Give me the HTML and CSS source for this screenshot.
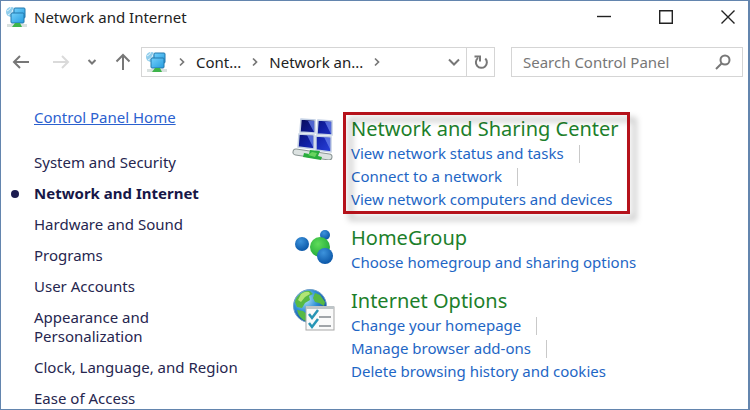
FILE: index.html
```html
<!DOCTYPE html>
<html lang="en">
<head>
<meta charset="utf-8">
<title>Network and Internet</title>
<link rel="stylesheet" href="styles.css">
</head>
<body>
<svg class="defs" aria-hidden="true">
  <defs>
    <linearGradient id="screen" x1="0" y1="0" x2="1" y2="1"><stop offset="0" stop-color="#74d0fa"/><stop offset="1" stop-color="#249ce0"/></linearGradient>
    <linearGradient id="dark" x1="0" y1="0" x2="1" y2="1"><stop offset="0" stop-color="#060a55"/><stop offset=".5" stop-color="#101fa4"/><stop offset="1" stop-color="#2941dc"/></linearGradient>
    <radialGradient id="blue" cx=".4" cy=".3" r=".7"><stop offset="0" stop-color="#3d93dc"/><stop offset="1" stop-color="#0b57a8"/></radialGradient>
    <radialGradient id="green" cx=".4" cy=".35" r=".7"><stop offset="0" stop-color="#5fdc5a"/><stop offset="1" stop-color="#20a838"/></radialGradient>
    <radialGradient id="sea" cx=".35" cy=".3" r=".75"><stop offset="0" stop-color="#b5e6fa"/><stop offset=".5" stop-color="#2f8fd6"/><stop offset="1" stop-color="#0c4092"/></radialGradient>
    <symbol id="network" viewBox="0 0 22 22">
      <circle cx="5" cy="6" r="5" fill="#8fcdec"/><path d="M1 5q3-1 4-4M2 9q4-1 6-7" stroke="#e4f5fc" fill="none"/>
      <rect x="8" y="2" width="11" height="10" rx="1" fill="url(#screen)" stroke="#2378ad"/>
      <rect x="5" y="7" width="13" height="10" rx="1" fill="url(#screen)" stroke="#2378ad"/>
      <path d="M1 18h20v3H1z" fill="#d9e1df"/><path d="M9 17h5l2 4H6z" fill="#3eb44b"/>
    </symbol>
    <symbol id="crumb" viewBox="0 0 8 10"><path d="M2 1.500 5.500 5 2 8.500" fill="none" stroke="#777" stroke-width="1.700"/></symbol>
  </defs>
</svg>
<div class="window">
  <header class="titlebar">
    <svg class="app-icon"><use href="#network"/></svg>
    <h1>Network and Internet</h1>
    <div class="controls">
      <button aria-label="Minimize"><svg viewBox="0 0 14 14"><path d="M0 6.500h14" /></svg></button>
      <button aria-label="Maximize"><svg viewBox="0 0 14 14"><path d="M.7.700h12.600v12.600H.7z"/></svg></button>
      <button aria-label="Close"><svg viewBox="0 0 14 14"><path d="m.5.500 13 13m0-13-13 13"/></svg></button>
    </div>
  </header>
  <nav class="toolbar" aria-label="Navigation">
    <div class="history">
      <button aria-label="Back"><svg viewBox="0 0 18 16"><path d="M17 8H2m6-6L2 8l6 6"/></svg></button>
      <button aria-label="Forward" disabled><svg viewBox="0 0 18 16"><path d="M1 8h15m-6-6 6 6-6 6"/></svg></button>
      <button class="recent" aria-label="Recent locations"><svg viewBox="0 0 10 16"><path d="m1.500 6 3.500 3.500L8.500 6"/></svg></button>
      <button aria-label="Up"><svg viewBox="0 0 18 18"><path d="M9 17V2M2.500 8.500 9 2l6.500 6.500"/></svg></button>
    </div>
    <div class="address">
      <svg class="app-icon"><use href="#network"/></svg>
      <svg class="crumb"><use href="#crumb"/></svg>
      <a href="#control">Cont...</a>
      <svg class="crumb"><use href="#crumb"/></svg>
      <a href="#network-internet">Network an...</a>
      <svg class="crumb"><use href="#crumb"/></svg>
      <button class="drop" aria-label="Previous locations"><svg viewBox="0 0 14 10"><path d="m2 2.500 5 5 5-5"/></svg></button>
      <button class="refresh" aria-label="Refresh"><svg viewBox="0 0 16 16"><path d="M12.300 4.500A5.500 5.500 0 1 1 5 4M1.500 2.500H7v5"/></svg></button>
    </div>
    <div class="search">
      <input type="text" aria-label="Search Control Panel" placeholder="Search Control Panel">
      <svg viewBox="0 0 16 16"><circle cx="10" cy="6" r="4.500"/><path d="m6.500 9.500-5.500 5.500"/></svg>
    </div>
  </nav>
  <div class="content">
    <aside>
      <a class="home" href="#home">Control Panel Home</a>
      <ul>
        <li><a href="#system">System and Security</a></li>
        <li class="current"><a href="#network-internet" aria-current="page">Network and Internet</a></li>
        <li><a href="#hardware">Hardware and Sound</a></li>
        <li><a href="#programs">Programs</a></li>
        <li><a href="#users">User Accounts</a></li>
        <li><a href="#appearance">Appearance and<br>Personalization</a></li>
        <li><a href="#clock">Clock, Language, and Region</a></li>
        <li><a href="#ease">Ease of Access</a></li>
      </ul>
    </aside>
    <main>
      <section>
        <svg class="picture" viewBox="0 0 44 44">
          <g fill="url(#dark)" stroke="#c3d0e4" stroke-width="1.500"><path d="m9 3 14 1v13L8 16zM26 4l14 1v14l-15-1zM7 18l15 1v14L6 31zM24 20l15 1v15l-15-2z"/></g>
          <path d="m16 5 6 11V5zM33 6l6 12V6zM15 19l6 12V20zM32 21l6 12V22z" fill="#6d88f0" opacity=".7"/>
          <path d="m4 36 33 5" stroke="#8b9695" stroke-width="7" stroke-linecap="round"/><path d="m4 36 33 5" stroke="#dce2e1" stroke-width="5" stroke-linecap="round"/>
          <path d="m18 34 10 1-2 5 4 1-1 3-18-3 1-4 5 1z" fill="#29ad3d"/><path d="m20 36 5 1-2 4-7-2" fill="#68d45f"/>
        </svg>
        <div class="category highlighted">
          <h2><a href="#sharing">Network and Sharing Center</a></h2>
          <ul>
            <li><a href="#status">View network status and tasks</a></li>
            <li><a href="#connect">Connect to a network</a></li>
            <li><a href="#devices">View network computers and devices</a></li>
          </ul>
        </div>
      </section>
      <section>
        <svg class="picture" viewBox="0 0 44 44">
          <circle cx="33" cy="10" r="5" fill="url(#blue)"/><circle cx="28" cy="22" r="10" fill="url(#green)"/>
          <circle cx="10" cy="19" r="7" fill="url(#blue)"/><circle cx="33" cy="31" r="8" fill="url(#blue)"/>
        </svg>
        <div class="category">
          <h2><a href="#homegroup">HomeGroup</a></h2>
          <ul><li><a href="#choose">Choose homegroup and sharing options</a></li></ul>
        </div>
      </section>
      <section>
        <svg class="picture" viewBox="0 0 44 44">
          <circle cx="18" cy="18" r="16.500" fill="url(#sea)" stroke="#6f9fc9"/>
          <path d="M8 6q5-4 10-3l3 3-4 2 1 4-5 3-3 5-5-1-2-5q1-5 5-8zM23 5l5 2 5 7-1 4-5-3-4-1-2-4zM5 22l6 1 5 4-2 6q-7-2-9-11z" fill="#57b944"/>
          <path d="M9 6q4-3 8-2l1 2-5 3-4 5-3-2z" fill="#b1e576"/>
          <rect x="14" y="19" width="28" height="23" fill="#fafafa" stroke="#a7a7a7"/><path d="M14 18h28v3H14z" fill="#bfc5c8"/>
          <path d="M27 29h12M27 38h12" stroke="#82888d" stroke-width="1.500"/>
          <path d="m17 26 3 4 6-8M17 35l3 4 6-8" fill="none" stroke="#2795b5" stroke-width="2.500"/>
        </svg>
        <div class="category">
          <h2><a href="#options">Internet Options</a></h2>
          <ul>
            <li><a href="#homepage">Change your homepage</a></li>
            <li><a href="#addons">Manage browser add-ons</a></li>
            <li><a href="#history">Delete browsing history and cookies</a></li>
          </ul>
        </div>
      </section>
    </main>
  </div>
</div>
</body>
</html>
```
FILE: styles.css
```css
* { box-sizing: border-box; }
body { margin: 0; font: 16px/20px "Noto Sans", "Open Sans", sans-serif; color: #222; background: #fff; }
h1, h2, ul { margin: 0; padding: 0; font-weight: 400; }
ul { list-style: none; }
a { color: inherit; text-decoration: none; }
button { padding: 0; border: 0; background: none; display: flex; align-items: center; justify-content: center; }
svg { flex: none; }
.defs { position: absolute; width: 0; height: 0; }
.window { min-height: 100vh; border: 1px solid #6385ae; border-right-width: 2px; }

.titlebar { display: flex; align-items: center; height: 32px; padding: 0 13px 0 5px; }
.app-icon { width: 22px; height: 22px; }
.titlebar h1 { margin-left: 6px; font-size: 15px; line-height: 20px; }
.controls { display: flex; gap: 48px; margin-left: auto; }
.controls svg { width: 14px; height: 14px; fill: none; stroke: #222; stroke-width: 1.4; }

.toolbar { display: flex; align-items: center; margin-top: 14px; padding: 0 5px 0 11px; font-size: 15px; }
.history { display: flex; align-items: center; gap: 22px; width: 129px; }
.history svg { width: 18px; height: 18px; fill: none; stroke: #777; stroke-width: 2; }
.history button:disabled svg { stroke: #dadada; }
.history .recent { margin: 0 -5px; }
.history .recent svg { width: 10px; }
.address { display: flex; align-items: center; flex: 1; height: 30px; margin-right: 16px; padding-left: 4px; border: 1px solid #d5d5d5; white-space: nowrap; }
.crumb { width: 8px; height: 10px; margin: 0 10px; }
.drop { margin-left: auto; width: 24px; height: 28px; }
.drop svg { width: 14px; height: 10px; }
.refresh { width: 28px; height: 28px; border-left: 1px solid #d5d5d5; }
.refresh svg { width: 16px; height: 16px; }
.drop svg, .refresh svg { fill: none; stroke: #777; stroke-width: 2; }
.search { display: flex; align-items: center; flex: 0 1 232px; min-width: 0; height: 30px; padding: 0 11px; border: 1px solid #d5d5d5; }
.search input { flex: 1; min-width: 0; padding: 0; border: 0; outline: 0; font: inherit; background: none; }
.search input::placeholder { color: #777; opacity: 1; }
.search svg { width: 16px; height: 16px; fill: none; stroke: #777; stroke-width: 2; }

.content { display: flex; padding-top: 31px; }
aside { width: 257px; padding-left: 33px; font-size: 15px; line-height: 19px; color: #26264f; }
.home { display: block; margin-bottom: 26px; color: #2b61cf; text-decoration: underline; }
aside ul { display: grid; gap: 12px; }
aside li { position: relative; }
.current { font-weight: 700; color: #171747; }
.current::before { content: ""; position: absolute; left: -23px; top: 6px; width: 8px; height: 8px; border-radius: 50%; background: #1c1c50; }

main { display: grid; gap: 14px; flex: 1; padding: 8px 0 0 34px; align-content: start; }
section { display: flex; gap: 15px; }
.picture { width: 44px; height: 44px; }
.category { position: relative; }
h2 { font-size: 20px; line-height: 26px; color: #1d7f2b; }
.category li { display: flex; align-items: center; font-size: 15px; line-height: 23px; color: #1e66c5; }
.category li:not(:last-child)::after { content: ""; width: 1px; height: 18px; margin-left: 15px; background: #c9c9c9; }
.highlighted::after { content: ""; position: absolute; inset: -4px -11px -3px -8px; border: 3px solid #b5121b; filter: drop-shadow(6px 6px 3px rgba(0, 0, 0, .3)); pointer-events: none; }
```
